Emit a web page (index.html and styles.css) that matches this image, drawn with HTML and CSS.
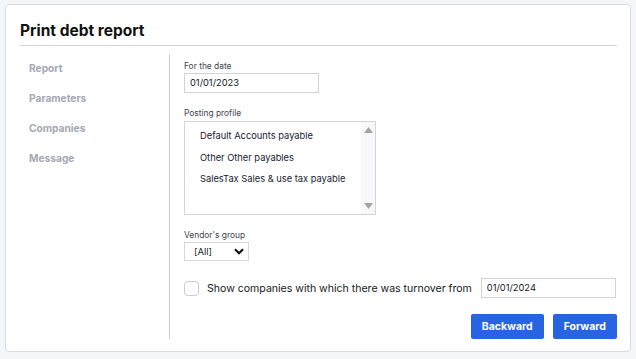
FILE: index.html
```html
<!DOCTYPE html>
<html lang="en">
<head>
    <meta charset="UTF-8">
    <title>Print debt report</title>
    <link rel="stylesheet" href="styles.css">
</head>
<body>
    <div class="card">
        <h1 class="title">Print debt report</h1>
        <div class="wizard">
            <div class="steps">
                <div class="step">Report</div>
                <div class="step">Parameters</div>
                <div class="step">Companies</div>
                <div class="step">Message</div>
            </div>
            <div class="form">
                <div class="field">
                    <div class="label">For the date</div>
                    <div class="input">01/01/2023</div>
                </div>
                <div class="field">
                    <div class="label">Posting profile</div>
                    <div class="listbox">
                        <div class="options">
                            <div class="option">Default Accounts payable</div>
                            <div class="option">Other Other payables</div>
                            <div class="option">SalesTax Sales &amp; use tax payable</div>
                        </div>
                        <div class="scrollbar">
                            <svg width="9" height="6" viewBox="0 0 9 6"><path d="M0 6 L4.5 0 L9 6 Z" fill="#a3a3a3"/></svg>
                            <svg width="9" height="6" viewBox="0 0 9 6"><path d="M0 0 L4.5 6 L9 0 Z" fill="#a3a3a3"/></svg>
                        </div>
                    </div>
                </div>
                <div class="field">
                    <div class="label">Vendor's group</div>
                    <div class="select">
                        <span>[All]</span>
                        <svg width="10" height="7" viewBox="0 0 10 7"><path d="M1 1.2 L5 5.2 L9 1.2" fill="none" stroke="#111" stroke-width="2.2"/></svg>
                    </div>
                </div>
                <div class="turnover">
                    <span class="checkbox"></span>
                    <span class="turnover-text">Show companies with which there was turnover from</span>
                    <div class="input">01/01/2024</div>
                </div>
                <div class="actions">
                    <button class="btn">Backward</button>
                    <button class="btn">Forward</button>
                </div>
            </div>
        </div>
    </div>
</body>
</html>
```

FILE: styles.css
```css
body {
    margin: 0;
    padding: 4px 5px 6px;
    background-color: #f5f6fa;
    font-family: Inter, "Noto Sans", sans-serif;
    color: #1c1f2a;
}
.card {
    background: #fff;
    border: 1px solid #d8dae4;
    border-radius: 4px;
    padding: 0 13px 12px 14px;
}
.title {
    margin: 0;
    padding: 16px 0 4px;
    font-size: 15.5px;
    line-height: 20px;
    font-weight: 700;
    color: #111;
    border-bottom: 1px solid #d3d4dc;
}
.wizard {
    display: flex;
    margin-top: 8px;
}
.steps {
    width: 140px;
    padding-left: 9px;
    border-right: 1px solid #c9cbd4;
}
.step {
    font-size: 10.2px;
    font-weight: 700;
    line-height: 28px;
    margin-bottom: 2px;
    color: #a4a8b3;
}
.form {
    flex: 1;
    padding: 6px 0 0 14px;
}
.field {
    margin-bottom: 14px;
}
.label {
    font-size: 8.4px;
    line-height: 12px;
    color: #3e4350;
    margin-bottom: 1px;
}
.input {
    box-sizing: border-box;
    width: 135px;
    height: 20px;
    border: 1px solid #d0d3db;
    padding-left: 5px;
    font-size: 9.3px;
    line-height: 18px;
    color: #161922;
}
.listbox {
    box-sizing: border-box;
    display: flex;
    width: 192px;
    height: 94px;
    margin-top: 2px;
    border: 1px solid #d0d3db;
}
.options {
    flex: 1;
    padding: 3px 0 0 15px;
}
.option {
    font-size: 9.3px;
    line-height: 21.5px;
    white-space: nowrap;
    color: #161a2c;
}
.scrollbar {
    width: 14px;
    background: #f8f8f8;
    display: flex;
    flex-direction: column;
    justify-content: space-between;
    align-items: center;
    padding: 5px 0;
}
.select {
    box-sizing: border-box;
    display: flex;
    align-items: center;
    justify-content: space-between;
    width: 65px;
    height: 19px;
    border: 1px solid #d5d7df;
    padding: 0 4px 0 9px;
    font-size: 9.5px;
}
.turnover {
    display: flex;
    align-items: center;
    margin-top: 17px;
}
.checkbox {
    box-sizing: border-box;
    width: 15px;
    height: 15px;
    border: 1px solid #c6c9e4;
    border-radius: 4px;
    margin-right: 8px;
}
.turnover-text {
    font-size: 10.55px;
    white-space: nowrap;
    margin-right: 9px;
    color: #161922;
}
.actions {
    display: flex;
    justify-content: flex-end;
    gap: 9px;
    margin-top: 16px;
}
.btn {
    height: 25px;
    padding: 0 11px;
    border: none;
    border-radius: 2px;
    background: #2863e3;
    color: #fff;
    font-family: inherit;
    font-size: 10.5px;
    font-weight: 700;
}
```
